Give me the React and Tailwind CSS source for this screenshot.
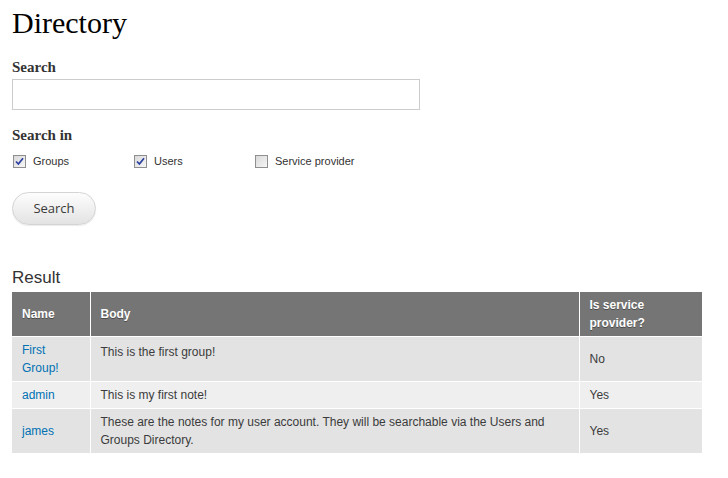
import { useState } from 'react';

const rows = [
    { name: 'First Group!', body: 'This is the first group!', provider: 'No' },
    { name: 'admin', body: 'This is my first note!', provider: 'Yes' },
    { name: 'james', body: 'These are the notes for my user account. They will be searchable via the Users and Groups Directory.', provider: 'Yes' }
];

function Checkbox({ label, checked, onToggle }) {
    return (
        <label className="flex w-[121px] cursor-pointer items-center gap-[7px]" onClick={onToggle}>
            <span className="flex h-[13px] w-[13px] items-center justify-center border border-[#8f8f8f] bg-gradient-to-br from-[#d9d9d9] to-[#f7f7f7]">
                {checked && (
                    <svg width="9" height="9" viewBox="0 0 9 9">
                        <path d="M1 4.5 L3.4 7 L8 1.2" fill="none" stroke="#2b3fa0" strokeWidth="1.7" />
                    </svg>
                )}
            </span>
            <span className="text-[11px] leading-[14px] text-[#333]">{label}</span>
        </label>
    );
}

function App() {
    const [query, setQuery] = useState('');
    const [scope, setScope] = useState({ groups: true, users: true, provider: false });

    const toggle = (field) => (e) => {
        e.preventDefault();
        setScope(prev => ({ ...prev, [field]: !prev[field] }));
    };

    return (
        <div className="min-h-[478px] bg-white px-3 pt-[5px] font-['Liberation_Sans',Arial,sans-serif] text-[#3b3b3b]">
            <h1 className="font-['Liberation_Serif',serif] text-[30px] leading-[36px] text-black">
                Directory
            </h1>

            <div className="mt-[16px] font-['Liberation_Serif',serif] text-[15px] font-bold leading-[20px] text-[#333]">
                Search
            </div>
            <input
                type="text"
                value={query}
                onChange={e => setQuery(e.target.value)}
                className="mt-[2px] block h-[31px] w-[408px] border border-[#ccc] px-2 text-sm focus:outline-none"
            />

            <div className="mt-[15px] font-['Liberation_Serif',serif] text-[15px] font-bold leading-[20px] text-[#333]">
                Search in
            </div>
            <div className="mt-[9px] flex pl-px">
                <Checkbox label="Groups" checked={scope.groups} onToggle={toggle('groups')} />
                <Checkbox label="Users" checked={scope.users} onToggle={toggle('users')} />
                <Checkbox label="Service provider" checked={scope.provider} onToggle={toggle('provider')} />
            </div>

            <button
                type="button"
                className="mt-[24px] block h-[33px] w-[84px] rounded-full border border-[#d4d4d4] bg-gradient-to-b from-[#fdfdfd] to-[#e3e3e3] font-['Open_Sans',sans-serif] text-[13px] text-[#3a3a3a] shadow-[0_1px_1px_rgba(0,0,0,0.08)]"
            >
                Search
            </button>

            <h2 className="mt-[43px] text-[17px] leading-[20px] text-[#333]">Result</h2>

            <table className="mt-[4px] w-[690px] border-collapse text-[12px] leading-[18px]">
                <thead>
                    <tr className="bg-[#757575] text-left font-bold text-white [text-shadow:0_1px_0_#4a4a4a]">
                        <th className="w-[78px] border-r border-white px-2.5 py-1 align-middle">Name</th>
                        <th className="border-r border-white px-2.5 py-1 align-middle">Body</th>
                        <th className="w-[123px] px-2.5 py-1 align-middle">Is service<br />provider?</th>
                    </tr>
                </thead>
                <tbody>
                    {rows.map((row, i) => (
                        <tr key={row.name} className={`${i % 2 === 0 ? 'bg-[#e3e3e3]' : 'bg-[#efefef]'} border-t border-white`}>
                            <td className="border-r border-white px-2.5 py-1 align-middle">
                                <a href="#" className="text-[#0071b3]">{row.name}</a>
                            </td>
                            <td className={`border-r border-white px-2.5 py-1 ${row.name === 'First Group!' ? 'pt-[6px] align-top' : 'align-middle'}`}>
                                {row.body}
                            </td>
                            <td className="px-2.5 py-1 align-middle">{row.provider}</td>
                        </tr>
                    ))}
                </tbody>
            </table>
        </div>
    );
}

export default App;
